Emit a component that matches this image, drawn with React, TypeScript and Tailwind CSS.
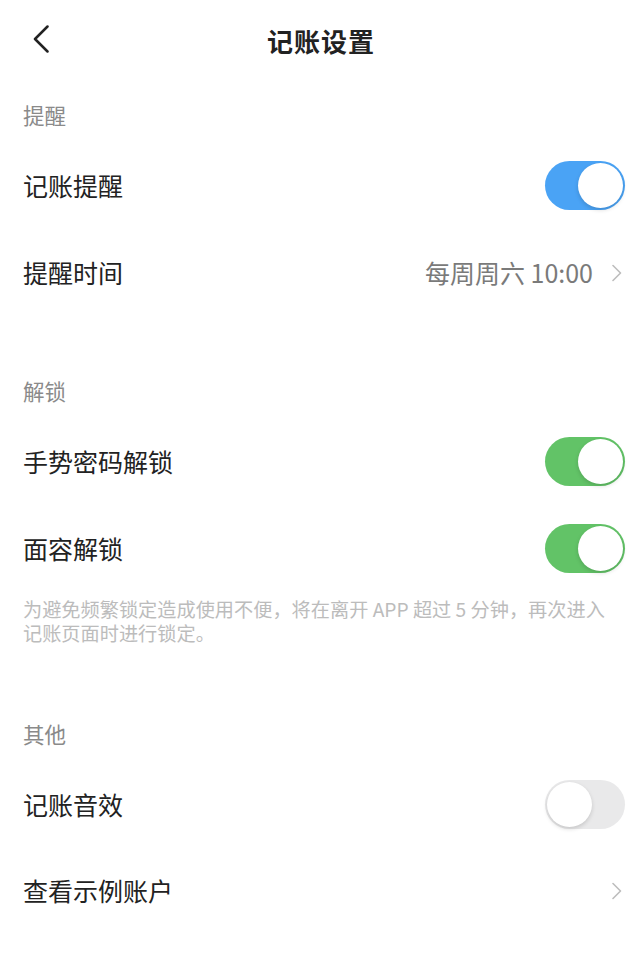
import React from 'react';

const font = { fontFamily: '"Noto Sans CJK SC", "Noto Sans", sans-serif' };

function Toggle({ on, color }: { on: boolean; color?: string }) {
    return (
        <div
            className={`w-[80px] h-[49px] rounded-full p-[2px] flex items-center ${on ? 'justify-end' : 'justify-start'} ${
                on ? (color === 'blue' ? 'bg-[#4aa3f5]' : 'bg-[#62c367]') : 'bg-[#e9e9ea]'
            }`}
        >
            <div className="w-[45px] h-[45px] rounded-full bg-white shadow-[0_2px_4px_rgba(0,0,0,0.15)]" />
        </div>
    );
}

function Chevron() {
    return (
        <svg width="10" height="18" viewBox="0 0 10 18" fill="none" className="mr-[3px]">
            <path d="M1 1.5 L8.5 9 L1 16.5" stroke="#bdbdbd" strokeWidth="1.6" strokeLinecap="round" strokeLinejoin="round" />
        </svg>
    );
}

function Header({ title, top }: { title: string; top: string }) {
    return <div className={`px-[23px] ${top} pb-4 text-[21.5px] leading-[22px] text-[#8a8a8a]`}>{title}</div>;
}

function Row({ label, children }: { label: string; children?: React.ReactNode }) {
    return (
        <div className="h-[87px] pl-[23px] pr-[17px] flex items-center justify-between">
            <span className="text-[25px] text-[#222]">{label}</span>
            <div className="flex items-center">{children}</div>
        </div>
    );
}

export default function App() {
    return (
        <div className="w-[642px] min-h-[974px] bg-white" style={font}>
            {/* 导航栏 */}
            <div className="h-[84px] relative flex items-center justify-center pb-[4px]">
                <div className="absolute left-[33px] top-[25px]">
                    <svg width="16" height="28" viewBox="0 0 16 28" fill="none">
                        <path d="M14.5 1.5 L2 14 L14.5 26.5" stroke="#222" strokeWidth="2.5" strokeLinecap="round" strokeLinejoin="round" />
                    </svg>
                </div>
                <h1 className="text-[26px] font-bold text-[#222] tracking-[1px]">记账设置</h1>
            </div>

            {/* 提醒 */}
            <Header title="提醒" top="pt-[20px]" />
            <Row label="记账提醒">
                <Toggle on color="blue" />
            </Row>
            <Row label="提醒时间">
                <span className="text-[25px] text-[#7a7a7a] mr-[19px]">每周周六 10:00</span>
                <Chevron />
            </Row>

            {/* 解锁 */}
            <Header title="解锁" top="pt-[64px]" />
            <Row label="手势密码解锁">
                <Toggle on />
            </Row>
            <Row label="面容解锁">
                <Toggle on />
            </Row>
            <p className="pl-[23px] pr-[34px] pt-[5px] text-[19.2px] leading-[24px] text-[#bcbcbc]">
                为避免频繁锁定造成使用不便，将在离开 APP 超过 5 分钟，再次进入记账页面时进行锁定。
            </p>

            {/* 其他 */}
            <Header title="其他" top="pt-[78px]" />
            <Row label="记账音效">
                <Toggle on={false} />
            </Row>
            <div className="h-[85px] pl-[23px] pr-[17px] flex items-center justify-between">
                <span className="text-[25px] text-[#222]">查看示例账户</span>
                <Chevron />
            </div>
        </div>
    );
}
